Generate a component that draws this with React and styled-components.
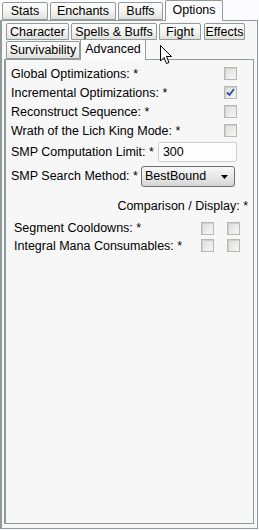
import React from "react";
import styled, { createGlobalStyle } from "styled-components";

const Global = createGlobalStyle`
  html, body { margin: 0; padding: 0; background: #fcfcfe; }
  body { font-family: "Liberation Sans", Arial, sans-serif; font-size: 12px; color: #000; }
  #root { width: 259px; height: 530px; position: relative; overflow: hidden; }
`;

const Page = styled.div`
  width: 259px;
  height: 530px;
  display: flex;
  flex-direction: column;
  position: relative;
`;

const TabStrip = styled.div`
  display: flex;
  align-items: flex-end;
  gap: ${(p) => p.$gap ?? 2}px;
  padding-left: ${(p) => p.$pad ?? 2}px;
  height: ${(p) => p.$h || 18}px;
  position: relative;
  z-index: 2;
`;

const Tab = styled.div`
  box-sizing: border-box;
  height: ${(p) => (p.$active ? p.$h + 3 : p.$h)}px;
  width: ${(p) => p.$w}px;
  margin-left: ${(p) => p.$ml || 0}px;
  margin-bottom: ${(p) => (p.$active ? -1 : 0)}px;
  border: 1px solid #919b9c;
  border-bottom: ${(p) => (p.$active ? "none" : "1px solid #919b9c")};
  border-radius: 2px 2px 0 0;
  background: ${(p) =>
    p.$active ? "#fcfcfe" : "linear-gradient(#fefefe 0%, #f4f4f1 50%, #e0e0dc 100%)"};
  display: flex;
  align-items: ${(p) => (p.$active ? "flex-start" : "center")};
  padding: ${(p) => (p.$active ? "2px 0 0 0" : "0")};
  justify-content: center;
  font-size: 12.5px;
  line-height: 14px;
  white-space: nowrap;
  ${(p) => (p.$active ? "box-shadow: inset 0 2px 0 #fff;" : "")}
`;

const OuterPanel = styled.div`
  box-sizing: border-box;
  width: 258px;
  flex: 1;
  margin-bottom: 1px;
  border: 1px solid #919b9c;
  border-left: 2px solid #919b9c;
  background: #f7f7f7;
  padding: 2px 3px 4px 2px;
  display: flex;
  flex-direction: column;
`;

const InnerTabs = styled.div`
  display: flex;
  flex-direction: column;
  gap: 1px;
`;

const InnerPanel = styled.div`
  box-sizing: border-box;
  flex: 1;
  border: 1px solid #919b9c;
  border-left: 2px solid #919b9c;
  background: #f7f7f7;
  padding: 4px 16px 0 5px;
  display: flex;
  flex-direction: column;
`;

const Row = styled.div`
  display: flex;
  align-items: center;
  height: ${(p) => p.$h || 19}px;
  margin-top: ${(p) => p.$mt || 0}px;
  margin-right: ${(p) => p.$mr || 0}px;
  padding-left: ${(p) => p.$pl || 0}px;
  justify-content: ${(p) => p.$justify || "flex-start"};
  white-space: nowrap;
`;

const Label = styled.span`
  flex: ${(p) => (p.$grow ? 1 : "none")};
  font-size: 12.5px;
`;

const Box = styled.span`
  box-sizing: border-box;
  width: 13px;
  height: 13px;
  margin-left: ${(p) => p.$ml || 0}px;
  border: 1px solid #b7b7b7;
  background: linear-gradient(135deg, #dcdcd8 0%, #ececea 60%, #f6f6f6 100%);
  box-shadow: inset 1px 1px 0 #d0d0d0;
  display: flex;
  align-items: center;
  justify-content: center;
  flex: none;
`;

const TextBox = styled.div`
  box-sizing: border-box;
  width: 79px;
  height: 20px;
  margin-left: 4px;
  border: 1px solid #cfcfcf;
  border-radius: 2px;
  background: #fdfdfd;
  padding-left: 4px;
  display: flex;
  align-items: center;
  font-size: 12.5px;
  flex: none;
`;

const Combo = styled.div`
  box-sizing: border-box;
  width: 94px;
  height: 21px;
  margin-left: 3px;
  border: 1px solid #6f6f6f;
  border-radius: 3px;
  background: linear-gradient(#f8f8f8 0%, #e8e8e8 50%, #d6d6d6 100%);
  display: flex;
  align-items: center;
  padding: 0 6px 0 3px;
  font-size: 12.5px;
  flex: none;
`;

const ComboText = styled.span`
  flex: 1;
  min-width: 0;
`;

const Arrow = styled.svg`
  flex: none;
  margin-top: 1px;
`;

const Cursor = styled.svg`
  position: absolute;
  left: 160px;
  top: 45px;
  z-index: 5;
`;

function Check({ checked, ml }) {
  return (
    <Box $ml={ml}>
      {checked && (
        <svg width="9" height="9" viewBox="0 0 9 9">
          <path d="M1 4.5 L3.5 7 L8 1" fill="none" stroke="#2a4fa8" strokeWidth="1.8" />
        </svg>
      )}
    </Box>
  );
}

export default function App() {
  return (
    <>
      <Global />
      <Page>
        <TabStrip $h={20} $pad={2}>
          <Tab $w={46} $h={18}>Stats</Tab>
          <Tab $w={66} $h={18}>Enchants</Tab>
          <Tab $w={45} $h={18}>Buffs</Tab>
          <Tab $w={58} $h={18} $active>Options</Tab>
        </TabStrip>
        <OuterPanel>
          <InnerTabs>
            <TabStrip $h={17} $pad={2}>
              <Tab $w={63} $h={17}>Character</Tab>
              <Tab $w={86} $h={17}>Spells &amp; Buffs</Tab>
              <Tab $w={42} $h={17}>Fight</Tab>
              <Tab $w={41} $h={17} $ml={1}>Effects</Tab>
            </TabStrip>
            <TabStrip $h={18} $pad={2} $gap={0}>
              <Tab $w={74} $h={18}>Survivability</Tab>
              <Tab $w={66} $h={18} $active>Advanced</Tab>
            </TabStrip>
          </InnerTabs>
          <InnerPanel>
            <Row>
              <Label $grow>Global Optimizations: *</Label>
              <Check />
            </Row>
            <Row>
              <Label $grow>Incremental Optimizations: *</Label>
              <Check checked />
            </Row>
            <Row>
              <Label $grow>Reconstruct Sequence: *</Label>
              <Check />
            </Row>
            <Row>
              <Label $grow>Wrath of the Lich King Mode: *</Label>
              <Check />
            </Row>
            <Row $h={20} $mt={2}>
              <Label>SMP Computation Limit: *</Label>
              <TextBox>300</TextBox>
            </Row>
            <Row $h={22} $mt={3}>
              <Label>SMP Search Method: *</Label>
              <Combo>
                <ComboText>BestBound</ComboText>
                <Arrow width="7" height="4" viewBox="0 0 7 4">
                  <path d="M0 0 H7 L3.5 4 Z" fill="#000" />
                </Arrow>
              </Combo>
            </Row>
            <Row $h={19} $mt={9} $justify="flex-end" $mr={-11}>
              <Label>Comparison / Display: *</Label>
            </Row>
            <Row $h={18} $mt={4} $pl={3} $mr={-3}>
              <Label $grow>Segment Cooldowns: *</Label>
              <Check />
              <Check ml={13} />
            </Row>
            <Row $h={17} $pl={3} $mr={-3}>
              <Label $grow>Integral Mana Consumables: *</Label>
              <Check />
              <Check ml={13} />
            </Row>
          </InnerPanel>
        </OuterPanel>
        <Cursor width="13" height="20" viewBox="0 0 13 20">
          <path
            d="M0.5 0.5 L0.5 16 L4 12.5 L6.5 18.5 L9 17.5 L6.5 11.5 L11.5 11.5 Z"
            fill="#fff"
            stroke="#000"
            strokeWidth="1"
            strokeLinejoin="miter"
          />
        </Cursor>
      </Page>
    </>
  );
}
